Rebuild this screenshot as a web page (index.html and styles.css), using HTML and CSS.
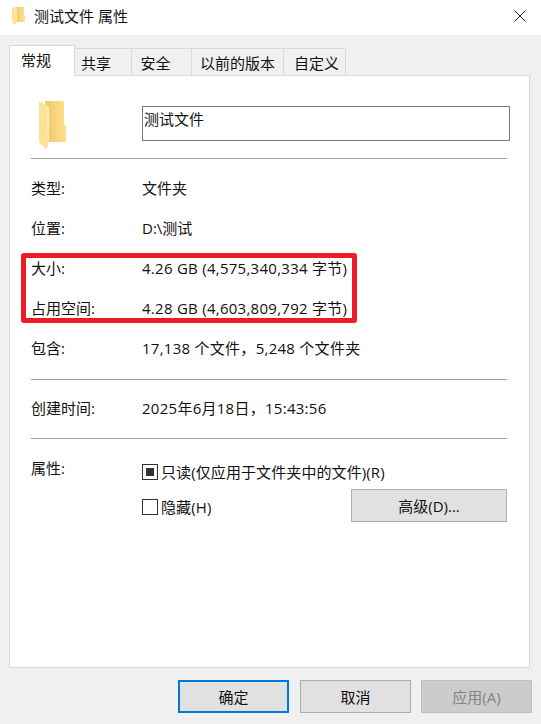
FILE: index.html
```html
<!DOCTYPE html>
<html lang="zh-CN">

<head>
    <meta charset="UTF-8">
    <meta name="viewport" content="width=device-width, initial-scale=1.0">
    <title>测试文件 属性</title>
    <link rel="stylesheet" href="styles.css">
</head>

<body>
    <div class="dialog">
        <!-- 标题栏 -->
        <div class="titlebar">
            <svg class="title-icon" viewBox="0 0 27 49" width="13" height="18" preserveAspectRatio="none">
                <use href="#folder"></use>
            </svg>
            <span class="title-text">测试文件 属性</span>
            <svg class="close-icon" viewBox="0 0 12 12" width="12" height="12">
                <path d="M0.5 0.5L11.5 11.5M11.5 0.5L0.5 11.5" stroke="#1a1a1a" stroke-width="1" fill="none"></path>
            </svg>
        </div>

        <div class="client">
            <!-- 选项卡 -->
            <div class="tabs">
                <div class="tab tab-active">常规</div>
                <div class="tab tab-share">共享</div>
                <div class="tab tab-security">安全</div>
                <div class="tab tab-versions">以前的版本</div>
                <div class="tab tab-custom">自定义</div>
            </div>

            <div class="panel">
                <div class="name-row">
                    <svg class="folder-icon" viewBox="0 0 27 49" width="27" height="49">
                        <defs>
                            <linearGradient id="folderBack" x1="0" y1="0" x2="1" y2="0">
                                <stop offset="0" stop-color="#eec86c"></stop>
                                <stop offset="1" stop-color="#ffe08a"></stop>
                            </linearGradient>
                        </defs>
                        <g id="folder">
                            <path d="M6 0H25V24H27V41H9z" fill="url(#folderBack)"></path>
                            <path d="M0 0L10 6V40L8 48H7L0 41z" fill="#fde295"></path>
                            <path d="M7 4.2L10 6V40L9 44z" fill="#ffecb0"></path>
                        </g>
                    </svg>
                    <div class="name-input">测试文件</div>
                </div>
                <hr class="sep sep-name">

                <div class="row"><span>类型:</span><span>文件夹</span></div>
                <div class="row"><span>位置:</span><span>D:\测试</span></div>

                <div class="size-group">
                    <div class="row"><span>大小:</span><span class="num">4.26 GB (4,575,340,334 字节)</span></div>
                    <div class="row"><span>占用空间:</span><span class="num">4.28 GB (4,603,809,792 字节)</span></div>
                    <div class="highlight"></div>
                </div>

                <div class="row"><span>包含:</span><span class="num">17,138 个文件，5,248 个文件夹</span></div>
                <hr class="sep sep-contains">

                <div class="row"><span>创建时间:</span><span class="num">2025年6月18日，15:43:56</span></div>
                <hr class="sep sep-created">

                <!-- 属性 -->
                <div class="attrs">
                    <span>属性:</span>
                    <div class="attr-list">
                        <div class="check-row">
                            <span class="check check-mixed"></span>
                            <span class="num-small">只读(仅应用于文件夹中的文件)(R)</span>
                        </div>
                        <div class="check-row check-row-last">
                            <span class="check"></span>
                            <span class="num-small">隐藏(H)</span>
                            <button class="btn btn-advanced">高级(D)...</button>
                        </div>
                    </div>
                </div>
            </div>

            <!-- 底部按钮 -->
            <div class="footer">
                <button class="btn btn-default">确定</button>
                <button class="btn">取消</button>
                <button class="btn btn-disabled">应用(A)</button>
            </div>
        </div>
    </div>
</body>

</html>
```

FILE: styles.css
```css
* {
    margin: 0;
    padding: 0;
    box-sizing: border-box;
}

body {
    font-family: "Open Sans", "Noto Sans CJK SC", sans-serif;
    font-size: 15px;
    line-height: 20px;
    color: #111111;
    background-color: white;
}

.dialog {
    display: flex;
    flex-direction: column;
    width: 541px;
    height: 724px;
}

/* 标题栏 */
.titlebar {
    display: flex;
    align-items: center;
    height: 35px;
    padding-left: 12px;
    padding-bottom: 3px;
    background-color: white;
}

.title-icon {
    margin-right: 9px;
}

.title-text {
    flex: 1;
}

.close-icon {
    margin-right: 15px;
}

.client {
    display: flex;
    flex-direction: column;
    flex: 1;
    padding: 10px 11px 0 9px;
    background-color: #f0f0f0;
}

/* 选项卡 */
.tabs {
    display: flex;
    align-items: flex-end;
    height: 31px;
}

.tab {
    height: 28px;
    padding-top: 4px;
    text-align: center;
    border: 1px solid #d9d9d9;
    border-left: none;
    border-bottom: none;
}

.tab-active {
    position: relative;
    z-index: 1;
    width: 66px;
    height: 32px;
    margin-bottom: -1px;
    padding-top: 4px;
    padding-right: 12px;
    border-left: 1px solid #d9d9d9;
    background-color: white;
}

.tab-share {
    width: 57px;
    padding-right: 14px;
}

.tab-security {
    width: 60px;
    padding-right: 12px;
}

.tab-versions {
    width: 92px;
}

.tab-custom {
    width: 62px;
    padding-left: 4px;
}

.panel {
    height: 593px;
    margin-top: -1px;
    padding: 25px 22px 0 21px;
    border: 1px solid #d9d9d9;
    background-color: white;
}

.name-row {
    display: flex;
    height: 57px;
}

.folder-icon {
    flex-shrink: 0;
    margin-left: 8px;
    margin-right: 76px;
}

.name-input {
    flex-shrink: 0;
    width: 368px;
    height: 35px;
    margin-top: 5px;
    padding: 2px 1px;
    border: 1px solid #7a7a7a;
}

.sep {
    border: none;
    height: 1px;
    background-color: #a0a0a0;
}

.sep-name {
    margin-bottom: 9px;
}

.sep-contains {
    margin-top: 11px;
    margin-bottom: 8px;
}

.sep-created {
    margin-top: 10px;
    margin-bottom: 19px;
}

.row {
    display: grid;
    grid-template-columns: 111px 1fr;
    align-items: center;
    height: 40px;
}

.num {
    letter-spacing: 0.27px;
}

.num-small {
    letter-spacing: 0.1px;
}

/* 红色标记框 */
.size-group {
    position: relative;
}

.highlight {
    position: absolute;
    left: -10px;
    top: 5px;
    width: 336px;
    height: 70px;
    border: 5px solid #ed1c24;
    border-radius: 3px;
}

/* 属性 */
.attrs {
    display: grid;
    grid-template-columns: 111px 1fr;
}

.attr-list {
    display: flex;
    flex-direction: column;
    padding-top: 4px;
}

.check-row {
    display: flex;
    align-items: center;
    gap: 3px;
    height: 20px;
}

.check-row-last {
    margin-top: 15px;
}

.check {
    display: flex;
    align-items: center;
    justify-content: center;
    width: 16px;
    height: 16px;
    border: 1px solid #333333;
    background-color: white;
}

.check-mixed::after {
    content: "";
    width: 8px;
    height: 8px;
    background-color: #333333;
}

/* 按钮 */
.btn {
    width: 111px;
    height: 33px;
    font: inherit;
    color: #111111;
    border: 1px solid #adadad;
    background-color: #e1e1e1;
}

.btn-advanced {
    width: 156px;
    margin-left: auto;
    margin-bottom: 3px;
}

.btn-default {
    margin-right: 1px;
    border: 2px solid #0078d7;
}

.btn-disabled {
    color: #838383;
    border-color: #bfbfbf;
    background-color: #cccccc;
}

.footer {
    display: flex;
    justify-content: flex-end;
    gap: 10px;
    margin-top: 12px;
    margin-right: -2px;
}
```
